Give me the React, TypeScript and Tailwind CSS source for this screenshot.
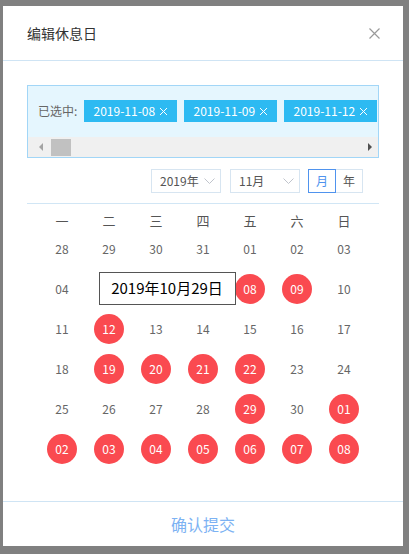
import React from "react";

type Cell = { d: string; s?: boolean; h?: boolean };

const rows: Cell[][] = [
  [{ d: "28" }, { d: "29" }, { d: "30" }, { d: "31" }, { d: "01" }, { d: "02" }, { d: "03" }],
  [{ d: "04" }, { d: "05", h: true }, { d: "06", h: true }, { d: "07", h: true }, { d: "08", s: true }, { d: "09", s: true }, { d: "10" }],
  [{ d: "11" }, { d: "12", s: true }, { d: "13" }, { d: "14" }, { d: "15" }, { d: "16" }, { d: "17" }],
  [{ d: "18" }, { d: "19", s: true }, { d: "20", s: true }, { d: "21", s: true }, { d: "22", s: true }, { d: "23" }, { d: "24" }],
  [{ d: "25" }, { d: "26" }, { d: "27" }, { d: "28" }, { d: "29", s: true }, { d: "30" }, { d: "01", s: true }],
  [{ d: "02", s: true }, { d: "03", s: true }, { d: "04", s: true }, { d: "05", s: true }, { d: "06", s: true }, { d: "07", s: true }, { d: "08", s: true }],
];

const weeks = ["一", "二", "三", "四", "五", "六", "日"];

function Chevron() {
  return (
    <svg width="11" height="7" viewBox="0 0 11 7" className="shrink-0">
      <path d="M0.5 0.5 L5.5 5.5 L10.5 0.5" fill="none" stroke="#c0c4cc" strokeWidth="1" />
    </svg>
  );
}

function Tag({ text }: { text: string }) {
  return (
    <div className="shrink-0 h-[22px] w-[93px] bg-[#2dbaf2] text-white text-[12px] flex items-center justify-center gap-[4px]">
      <span>{text}</span>
      <svg width="9" height="9" viewBox="0 0 9 9">
        <path d="M1 1 L8 8 M8 1 L1 8" stroke="#fff" strokeWidth="1" />
      </svg>
    </div>
  );
}

export default function App() {
  return (
    <div
      className="w-[409px] h-[554px] bg-[#808080] pt-[6px] pl-[3px]"
      style={{ fontFamily: '"Noto Sans CJK SC", "Noto Sans", sans-serif' }}
    >
      <div className="w-[400px] h-[540px] bg-white flex flex-col">
        {/* header */}
        <div className="h-[55px] shrink-0 flex items-center justify-between pl-[24px] pr-[23px] border-b border-[#cfe4f4]">
          <span className="text-[14px] text-[#333]">编辑休息日</span>
          <svg width="11" height="11" viewBox="0 0 11 11">
            <path d="M0.5 0.5 L10.5 10.5 M10.5 0.5 L0.5 10.5" stroke="#9a9a9a" strokeWidth="1.2" />
          </svg>
        </div>

        {/* body */}
        <div className="flex-1 px-[24px] pt-[24px]">
          <div className="border border-[#a2d6f7] bg-[#e5f6fe] h-[73px] flex flex-col">
            <div className="flex-1 flex items-start pt-[14px] pl-[10px] overflow-hidden">
              <span className="shrink-0 text-[12px] text-[#666] leading-[22px] mr-[7px]">已选中:</span>
              <div className="flex gap-[7px] overflow-hidden">
                <Tag text="2019-11-08" />
                <Tag text="2019-11-09" />
                <Tag text="2019-11-12" />
              </div>
            </div>
            <div className="h-[20px] bg-[#f0f0f0] flex items-center shrink-0">
              <div className="w-[21px] flex justify-center ml-[2px]">
                <svg width="4" height="8" viewBox="0 0 4 8">
                  <path d="M4 0 L0 4 L4 8 Z" fill="#a3a3a3" />
                </svg>
              </div>
              <div className="w-[20px] h-[17px] bg-[#c1c1c1]" />
              <div className="flex-1" />
              <div className="w-[17px] flex justify-center">
                <svg width="4" height="8" viewBox="0 0 4 8">
                  <path d="M0 0 L4 4 L0 8 Z" fill="#505050" />
                </svg>
              </div>
            </div>
          </div>

          {/* controls */}
          <div className="flex justify-end items-center mt-[11px] pr-[16px] h-[24px]">
            <div className="w-[70px] h-[24px] border border-[#d7e5f1] flex items-center justify-between pl-[8px] pr-[5px] text-[12px] text-[#555]">
              <span>2019年</span>
              <Chevron />
            </div>
            <div className="ml-[9px] w-[70px] h-[24px] border border-[#d7e5f1] flex items-center justify-between pl-[8px] pr-[5px] text-[12px] text-[#555]">
              <span>11月</span>
              <Chevron />
            </div>
            <div className="ml-[8px] flex h-[24px]">
              <div className="w-[28px] h-[24px] border border-[#4f93ee] flex items-center justify-center text-[12px] text-[#4f93ee]">
                月
              </div>
              <div className="w-[27px] h-[24px] border border-l-0 border-[#d7e5f1] flex items-center justify-center text-[12px] text-[#555]">
                年
              </div>
            </div>
          </div>

          <div className="mt-[10px] border-t border-[#d1e6f5]" />

          {/* calendar */}
          <div className="relative w-[329px] mx-auto">
            <div className="grid grid-cols-7 h-[25px] items-start">
              {weeks.map((w) => (
                <div key={w} className="text-center text-[13px] leading-[18px] mt-[8px] text-[#555]">
                  {w}
                </div>
              ))}
            </div>
            <div className="grid grid-cols-7">
              {rows.map((r, i) =>
                r.map((c, j) => (
                  <div key={`${i}-${j}`} className="h-[40px] flex items-center justify-center">
                    {c.h ? null : c.s ? (
                      <div className="w-[30px] h-[30px] rounded-full bg-[#fa4a50] text-white text-[12px] flex items-center justify-center">
                        {c.d}
                      </div>
                    ) : (
                      <span className="text-[12px] text-[#666]">{c.d}</span>
                    )}
                  </div>
                ))
              )}
            </div>
            <div className="absolute left-[60px] top-[68px] w-[137px] h-[33px] bg-white border border-[#555] flex items-center justify-center text-[15px] text-black">
              2019年10月29日
            </div>
          </div>
        </div>

        {/* footer */}
        <div className="h-[45px] shrink-0 border-t border-[#cfe4f4] flex items-center justify-center">
          <span className="text-[16px] text-[#7cb2f3]">确认提交</span>
        </div>
      </div>
    </div>
  );
}
